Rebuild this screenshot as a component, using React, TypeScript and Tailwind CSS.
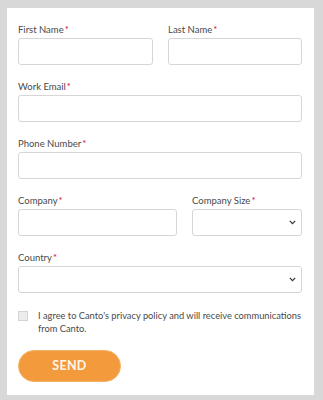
import React from 'react'

function Label({ text }: { text: string }) {
  return (
    <label className="block h-[12px] text-[9.5px] leading-[12px] text-[#4a4a4a]">
      {text}
      <span className="ml-[1px] text-[#d0103a]">*</span>
    </label>
  )
}

function Input() {
  return <input className="mt-[2px] block h-[27px] w-full rounded-[3px] border border-[#d6d6d6] bg-white" />
}

function Select() {
  return (
    <div className="relative mt-[2px] h-[27px] w-full rounded-[3px] border border-[#d6d6d6] bg-white">
      <svg className="absolute right-[5px] top-[10px]" width="7" height="5" viewBox="0 0 7 5" fill="none">
        <path d="M0.8 0.8 L3.5 3.6 L6.2 0.8" stroke="#333" strokeWidth="1.2" />
      </svg>
    </div>
  )
}

export default function App() {
  return (
    <div className="min-h-[400px] w-[323px] bg-[#d8d8d8] pl-[7px] pt-[8px] font-['Lato',sans-serif]">
      <div className="w-[307px] h-[387px] bg-white px-[11px] pr-[12px] pt-[16px]">
        <div className="flex gap-[15px]">
          <div className="w-[135px]">
            <Label text="First Name" />
            <Input />
          </div>
          <div className="flex-1">
            <Label text="Last Name" />
            <Input />
          </div>
        </div>

        <div className="mt-[16px]">
          <Label text="Work Email" />
          <Input />
        </div>

        <div className="mt-[16px]">
          <Label text="Phone Number" />
          <Input />
        </div>

        <div className="mt-[16px] flex gap-[15px]">
          <div className="w-[159px]">
            <Label text="Company" />
            <Input />
          </div>
          <div className="flex-1">
            <Label text="Company Size" />
            <Select />
          </div>
        </div>

        <div className="mt-[16px]">
          <Label text="Country" />
          <Select />
        </div>

        <div className="mt-[16px] flex items-start">
          <div className="mt-[2px] h-[10px] w-[10px] shrink-0 border border-[#d4d4d4] bg-[#ececec]" />
          <p className="ml-[10px] mr-[-4px] text-[9.3px] leading-[13px] text-[#4a4a4a]">
            I agree to Canto's privacy policy and will receive communications from Canto.
          </p>
        </div>

        <button className="mt-[15px] h-[32px] w-[103px] rounded-full border border-[#f7b26a] bg-[#f39a3d] text-[12.5px] font-bold tracking-[0.3px] text-[#fff6ea]">
          SEND
        </button>
      </div>
    </div>
  )
}
